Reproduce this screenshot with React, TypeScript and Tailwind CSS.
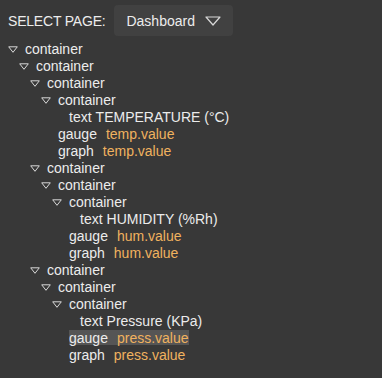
import React from 'react';

type Node = {
  kind: string;
  value?: string;
  binding?: string;
  selected?: boolean;
  children?: Node[];
};

const tree: Node = {
  kind: 'container',
  children: [
    {
      kind: 'container',
      children: [
        {
          kind: 'container',
          children: [
            {
              kind: 'container',
              children: [{ kind: 'text', value: 'TEMPERATURE (°C)' }],
            },
            { kind: 'gauge', binding: 'temp.value' },
            { kind: 'graph', binding: 'temp.value' },
          ],
        },
        {
          kind: 'container',
          children: [
            {
              kind: 'container',
              children: [
                {
                  kind: 'container',
                  children: [{ kind: 'text', value: 'HUMIDITY (%Rh)' }],
                },
                { kind: 'gauge', binding: 'hum.value' },
                { kind: 'graph', binding: 'hum.value' },
              ],
            },
          ],
        },
        {
          kind: 'container',
          children: [
            {
              kind: 'container',
              children: [
                {
                  kind: 'container',
                  children: [{ kind: 'text', value: 'Pressure (KPa)' }],
                },
                { kind: 'gauge', binding: 'press.value', selected: true },
                { kind: 'graph', binding: 'press.value' },
              ],
            },
          ],
        },
      ],
    },
  ],
};

function Caret({ className }: { className: string }) {
  return (
    <svg viewBox="0 0 10 7" className={className} fill="none">
      <path d="M0.7 0.8 L9.3 0.8 L5 6.3 Z" stroke="#d8d8d8" strokeWidth="1" strokeLinejoin="round" />
    </svg>
  );
}

function TreeRow({ node, depth }: { node: Node; depth: number }) {
  const hasChildren = !!node.children;
  return (
    <>
      <div className="flex items-center h-[17px]" style={{ paddingLeft: 8 + depth * 11 }}>
        <div className="w-[17px] shrink-0 flex items-center">
          {hasChildren && <Caret className="w-[10px] h-[7px] mt-[1px]" />}
        </div>
        <span
          className={`flex items-center h-[15px] whitespace-nowrap ${node.selected ? 'bg-[#555555]' : ''}`}
        >
          <span className="text-[#ececec]">{node.kind}</span>
          {node.value && <span className="text-[#ececec] ml-[4px]">{node.value}</span>}
          {node.binding && <span className="text-[#f0b25f] ml-[9px]">{node.binding}</span>}
        </span>
      </div>
      {node.children?.map((c, i) => <TreeRow key={i} node={c} depth={depth + 1} />)}
    </>
  );
}

export default function App() {
  return (
    <div className="w-[382px] h-[378px] bg-[#383838] overflow-hidden text-[14px] leading-none font-['Liberation_Sans',Arial,sans-serif]">
      <div className="flex items-center h-[40px] pl-[8px] pt-[1px]">
        <span className="text-[#ececec] tracking-[-0.2px]">SELECT PAGE:</span>
        <div className="ml-[9px] flex items-center h-[31px] w-[119px] rounded-[4px] bg-[#414141] pl-[12px]">
          <span className="text-[#ececec]">Dashboard</span>
          <svg viewBox="0 0 16 10" className="w-[16px] h-[10px] ml-[10px]" fill="none">
            <path d="M1 1 L15 1 L8 9 Z" stroke="#d8d8d8" strokeWidth="1.2" strokeLinejoin="round" />
          </svg>
        </div>
      </div>
      <div className="mt-[0px]">
        <TreeRow node={tree} depth={0} />
      </div>
    </div>
  );
}
